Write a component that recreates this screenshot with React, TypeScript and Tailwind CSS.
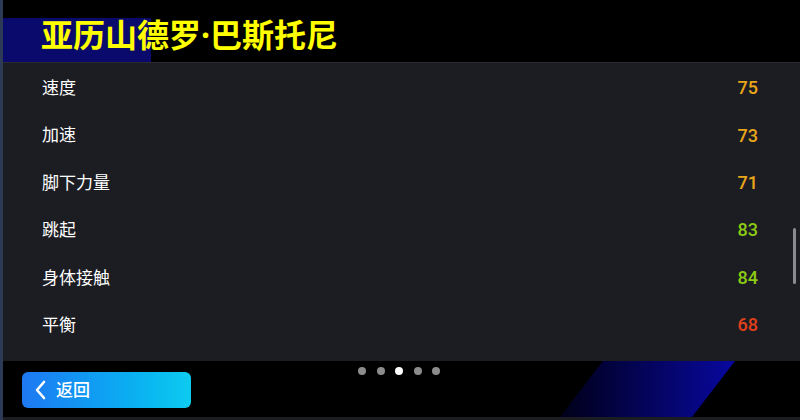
import React from "react"

const stats = [
  { name: "速度", value: 75, color: "text-[#eaa619]" },
  { name: "加速", value: 73, color: "text-[#eaa619]" },
  { name: "脚下力量", value: 71, color: "text-[#eaa619]" },
  { name: "跳起", value: 83, color: "text-[#8ccb14]" },
  { name: "身体接触", value: 84, color: "text-[#8ccb14]" },
  { name: "平衡", value: 68, color: "text-[#e2401b]" },
]

const font = { fontFamily: '"Noto Sans", "Noto Sans CJK SC", sans-serif' }

export default function App() {
  return (
    <div
      className="w-[800px] h-[420px] bg-black flex flex-col overflow-hidden relative"
      style={font}
    >
      {/* left edge strip */}
      <div className="absolute left-0 top-0 bottom-0 w-[3px] bg-[#2c3a55]" />

      {/* header */}
      <div className="h-[62px] relative shrink-0">
        <div className="absolute left-[3px] top-[18px] w-[148px] h-[44px] bg-[#0a0a6c]" />
        <h1 className="relative pl-[41px] pt-[15px] text-[32px] leading-[40px] font-bold text-[#ffff00]">
          亚历山德罗·巴斯托尼
        </h1>
      </div>

      {/* stats panel */}
      <div className="h-[299px] shrink-0 bg-[#1c1d23] border-t border-[#2a2b32] relative ml-[3px]">
        <div className="flex flex-col pt-[1px]">
          {stats.map((s) => (
            <div key={s.name} className="h-[47.4px] flex items-center justify-between pl-[39px] pr-[42px]">
              <span className="text-[17px] text-white">{s.name}</span>
              <span
                className={`text-[18px] font-medium ${s.color}`}
                style={{ fontFamily: "Roboto, sans-serif" }}
              >
                {s.value}
              </span>
            </div>
          ))}
        </div>
        <div className="absolute right-[4px] top-[165px] w-[3px] h-[56px] bg-[#8a8a90] rounded-sm" />
      </div>

      {/* footer */}
      <div className="h-[56px] shrink-0 relative ml-[3px]">
        <svg className="absolute left-[557px] top-0" width="176" height="56" viewBox="0 0 176 56">
          <defs>
            <linearGradient id="para" x1="0" y1="0" x2="1" y2="0">
              <stop offset="0" stopColor="#000018" />
              <stop offset="1" stopColor="#0808a0" />
            </linearGradient>
          </defs>
          <polygon points="43,0 175,0 132,56 0,56" fill="url(#para)" />
        </svg>

        <div className="absolute left-[355px] top-[6px] flex gap-[10.5px]">
          <span className="w-[8px] h-[8px] rounded-full bg-[#8c8c8c]" />
          <span className="w-[8px] h-[8px] rounded-full bg-[#8c8c8c]" />
          <span className="w-[8px] h-[8px] rounded-full bg-white" />
          <span className="w-[8px] h-[8px] rounded-full bg-[#8c8c8c]" />
          <span className="w-[8px] h-[8px] rounded-full bg-[#8c8c8c]" />
        </div>

        <button className="absolute left-[19px] top-[11px] w-[169px] h-[36px] rounded-[6px] bg-gradient-to-r from-[#1e78f2] to-[#0ecbef] flex items-center gap-[10px] pl-[12px]">
          <svg width="12" height="20" viewBox="0 0 12 20" fill="none">
            <path d="M10 2 L3 10 L10 18" stroke="white" strokeWidth="2.6" strokeLinecap="round" strokeLinejoin="round" />
          </svg>
          <span className="text-[17px] text-white font-medium">返回</span>
        </button>
      </div>

      <div className="flex-1 bg-[#1c1d23]" />
    </div>
  )
}
